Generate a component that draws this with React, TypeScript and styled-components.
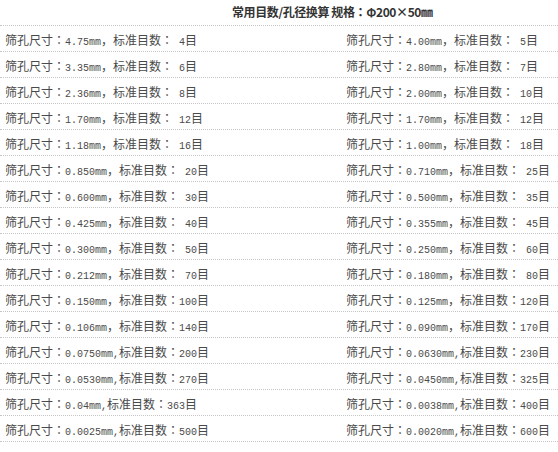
import styled, { createGlobalStyle } from "styled-components";

interface Entry {
  size: string;
  mesh: string;
  wide?: boolean;
}

const rows: [Entry, Entry][] = [
  [{ size: "4.75mm", mesh: " 4", wide: true }, { size: "4.00mm", mesh: " 5", wide: true }],
  [{ size: "3.35mm", mesh: " 6", wide: true }, { size: "2.80mm", mesh: " 7", wide: true }],
  [{ size: "2.36mm", mesh: " 8", wide: true }, { size: "2.00mm", mesh: " 10", wide: true }],
  [{ size: "1.70mm", mesh: " 12", wide: true }, { size: "1.70mm", mesh: " 12", wide: true }],
  [{ size: "1.18mm", mesh: " 16", wide: true }, { size: "1.00mm", mesh: " 18", wide: true }],
  [{ size: "0.850mm", mesh: " 20", wide: true }, { size: "0.710mm", mesh: " 25", wide: true }],
  [{ size: "0.600mm", mesh: " 30", wide: true }, { size: "0.500mm", mesh: " 35", wide: true }],
  [{ size: "0.425mm", mesh: " 40", wide: true }, { size: "0.355mm", mesh: " 45", wide: true }],
  [{ size: "0.300mm", mesh: " 50", wide: true }, { size: "0.250mm", mesh: " 60", wide: true }],
  [{ size: "0.212mm", mesh: " 70", wide: true }, { size: "0.180mm", mesh: " 80", wide: true }],
  [{ size: "0.150mm", mesh: "100", wide: true }, { size: "0.125mm", mesh: "120", wide: true }],
  [{ size: "0.106mm", mesh: "140", wide: true }, { size: "0.090mm", mesh: "170", wide: true }],
  [{ size: "0.0750mm", mesh: "200" }, { size: "0.0630mm", mesh: "230" }],
  [{ size: "0.0530mm", mesh: "270" }, { size: "0.0450mm", mesh: "325" }],
  [{ size: "0.04mm", mesh: "363" }, { size: "0.0038mm", mesh: "400" }],
  [{ size: "0.0025mm", mesh: "500" }, { size: "0.0020mm", mesh: "600" }],
];

// one "筛孔尺寸：x，标准目数：n目" cell
const Cell = ({ entry }: { entry: Entry }) => (
  <Item>
    筛孔尺寸<Colon>：</Colon>
    <Num>{entry.size}</Num>
    {entry.wide ? "，" : <Num>,</Num>}
    标准目数<Colon>：</Colon>
    <Num>{entry.mesh}</Num>目
  </Item>
);

const App = () => (
  <>
    <GlobalStyle />
    <Table>
      <Header>
        常用目数/孔径换算 规格<Colon>：</Colon>Φ200×50㎜
      </Header>
      {rows.map(([left, right], i) => (
        <Row key={i}>
          <Cell entry={left} />
          <Cell entry={right} />
        </Row>
      ))}
    </Table>
  </>
);

const GlobalStyle = createGlobalStyle`
  body {
    margin: 0;
    background: #fff;
    font-family: "Noto Sans CJK SC", sans-serif;
  }
`;

const Table = styled.div`
  width: 558px;
  color: #4a4a4a;
  font-size: 12px;
`;

const Header = styled.div`
  height: 25px;
  line-height: 24px;
  padding-left: 232px;
  font-weight: bold;
  letter-spacing: -0.4px;
  color: #333;
  border-bottom: 1px dotted #c6c6c6;
`;

const Row = styled.div`
  display: grid;
  grid-template-columns: 341px 1fr;
  height: 25px;
  border-bottom: 1px dotted #c6c6c6;
`;

const Item = styled.div`
  padding-left: 5px;
  line-height: 27px;
  white-space: pre;
`;

const Colon = styled.span`
  font-family: "Noto Sans CJK TC", sans-serif;
`;

const Num = styled.span`
  font-family: "Liberation Mono", monospace;
  font-size: 10px;
`;

export default App;
